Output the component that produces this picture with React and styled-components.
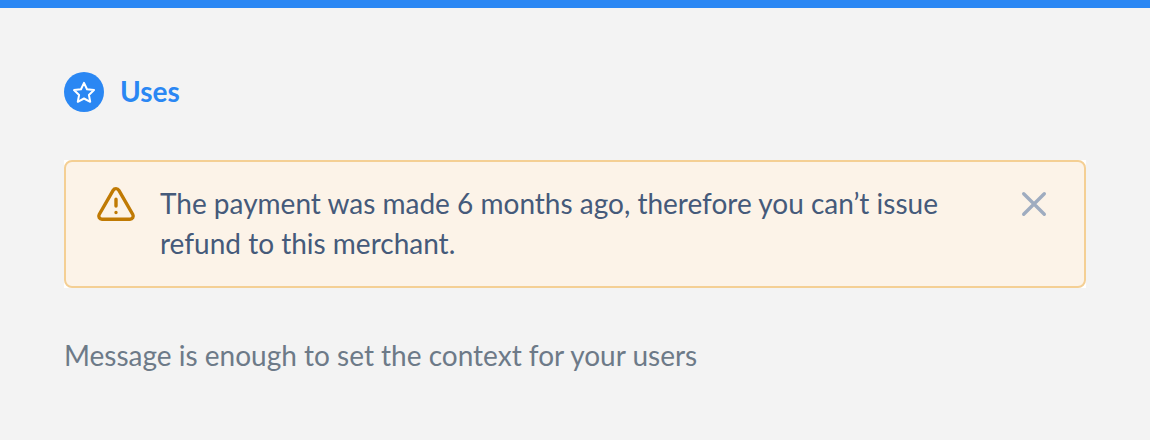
import React from 'react';
import styled, { createGlobalStyle } from 'styled-components';

const GlobalStyle = createGlobalStyle`
  * { box-sizing: border-box; }
  body {
    margin: 0;
    background: #f3f3f3;
    font-family: Lato, "Liberation Sans", sans-serif;
    -webkit-font-smoothing: antialiased;
  }
`;

const Page = styled.main`
  min-height: 440px;
  padding: 64px 64px 0;
  border-top: 8px solid #2a87f3;
`;

const Heading = styled.header`
  display: flex;
  align-items: center;
  gap: 16px;
  height: 40px;
`;

const Badge = styled.span`
  display: flex;
  align-items: center;
  justify-content: center;
  width: 40px;
  height: 40px;
  border-radius: 50%;
  background: #2a87f3;
`;

const Title = styled.h2`
  margin: 0;
  padding-bottom: 2px;
  font-size: 28px;
  line-height: 38px;
  font-weight: 700;
  color: #2a87f3;
`;

const AlertFrame = styled.div`
  width: 1022px;
  margin-top: 48px;
  background: #fff;
`;

const Alert = styled.section`
  display: flex;
  align-items: flex-start;
  height: 128px;
  padding: 22px 30px;
  border: 2px solid #f4cf94;
  border-radius: 8px;
  background: #fcf3e8;
`;

const WarningIcon = styled.svg`
  flex: none;
  margin-top: 1px;
`;

const Message = styled.p`
  flex: 1;
  margin: -1px 0 0 24px;
  padding-right: 40px;
  font-size: 28px;
  line-height: 40px;
  color: #455a7a;
`;

const CloseButton = styled.button`
  display: flex;
  padding: 0;
  border: 0;
  background: none;
`;

const Caption = styled.p`
  margin: 47px 0 0;
  font-size: 28px;
  line-height: 40px;
  color: #6d7a88;
`;

export default function App() {
  return (
    <>
      <GlobalStyle />
      <Page>
        <Heading>
          <Badge>
            <svg width="24" height="24" viewBox="0 0 24 24" fill="none" stroke="#fff" strokeWidth="2" strokeLinejoin="round">
              <path d="M12 2.900l3 6.300 7 .9-5.100 4.800 1.300 6.900L12 18.500l-6.200 3.300 1.300-6.900L2 10.100l7-.9 3-6.300z" />
            </svg>
          </Badge>
          <Title>Uses</Title>
        </Heading>
        <AlertFrame>
          <Alert role="alert">
            <WarningIcon width="40" height="40" viewBox="0 0 40 40" fill="none" stroke="#c07a04" strokeWidth="3.4" strokeLinecap="round" strokeLinejoin="round">
              <path d="M17.100 5.300 3.200 29.500c-1.200 2.200.3 4.800 2.800 4.800h28c2.500 0 4-2.600 2.800-4.800L22.900 5.300c-1.300-2.200-4.500-2.200-5.800 0Z" />
              <path d="M20 14.200v6.800M20 27.500v.1" />
            </WarningIcon>
            <Message>The payment was made 6 months ago, therefore you can’t issue refund to this merchant.</Message>
            <CloseButton aria-label="Close">
              <svg width="40" height="40" viewBox="0 0 40 40" fill="none" stroke="#9facc0" strokeWidth="3.4" strokeLinecap="round">
                <path d="M9.700 9.700l20.600 20.600M30.300 9.700l-20.600 20.600" />
              </svg>
            </CloseButton>
          </Alert>
        </AlertFrame>
        <Caption>Message is enough to set the context for your users</Caption>
      </Page>
    </>
  );
}
